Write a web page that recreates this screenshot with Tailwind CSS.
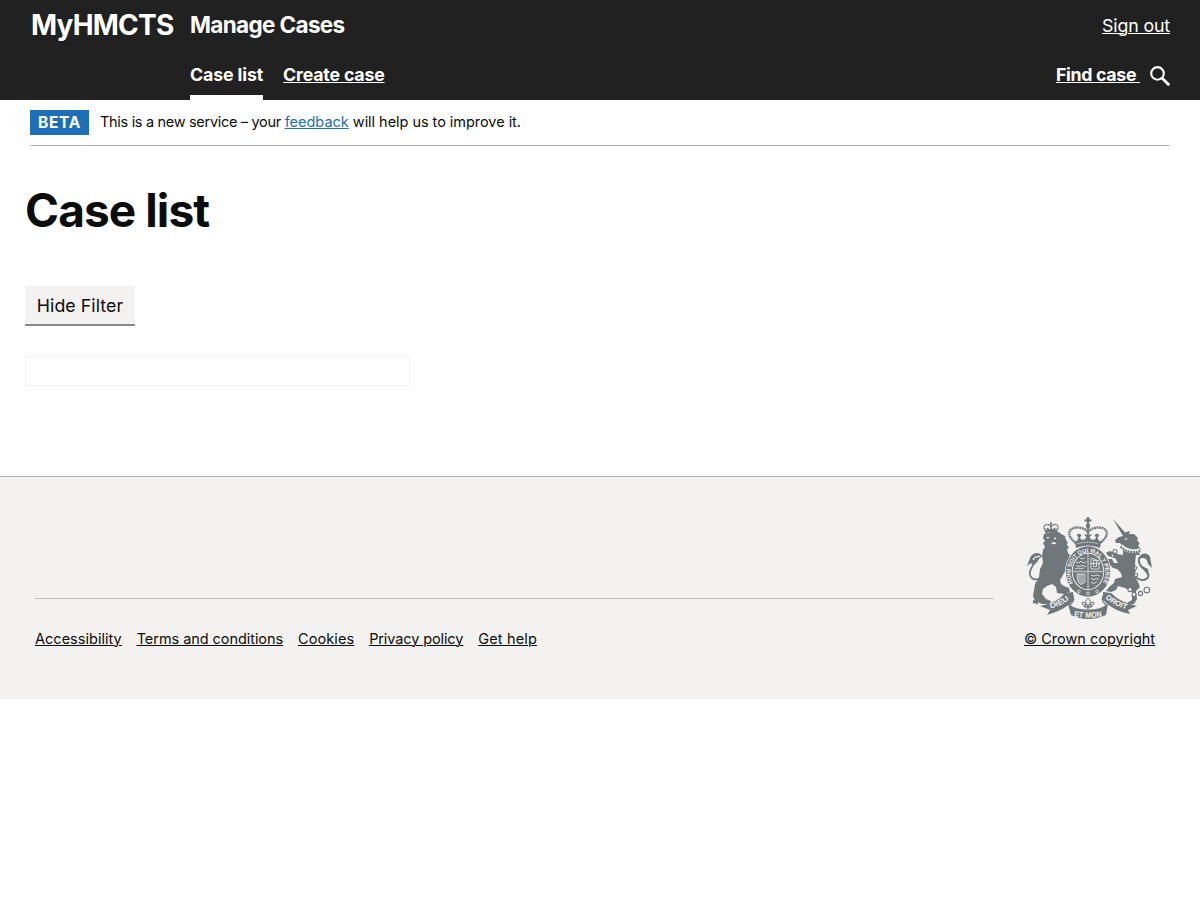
<!DOCTYPE html>
<html lang="en">
<head>
<meta charset="utf-8">
<title>Case list - Manage Cases</title>
<script src="https://cdn.jsdelivr.net/npm/@tailwindcss/browser@4"></script>
</head>
<body class="bg-white text-[#0b0c0c] font-['Inter','Liberation_Sans',sans-serif]">
<header class="h-[100px] bg-[#212121] text-white px-[30px] flex flex-col justify-between">
  <div class="flex h-[50px] items-center">
    <div class="w-40 pl-px text-[28px] font-bold leading-[50px] tracking-[-0.8px]">MyHMCTS</div>
    <div class="text-[22.5px] font-bold leading-[50px] tracking-[-0.65px]">Manage Cases</div>
    <a href="#" class="ml-auto pt-px text-[17.8px] leading-[50px] tracking-[-0.15px] underline decoration-1 underline-offset-1">Sign out</a>
  </div>
  <nav class="flex h-[50px] pl-40 text-[17.8px] font-bold leading-[50px]">
    <a href="#" class="h-[50px] border-b-5 border-white mr-5 tracking-[-0.14px]">Case list</a>
    <a href="#" class="tracking-[-0.2px] underline decoration-1 underline-offset-1">Create case</a>
    <a href="#" class="ml-auto whitespace-pre tracking-[-0.35px] underline decoration-1 underline-offset-1">Find case </a>
    <svg class="ml-2.5 mt-4 w-5 h-5" viewBox="0 0 20 20" fill="none" stroke="white"><circle cx="7.5" cy="7.4" r="6.3" stroke-width="2.1"/><path d="M12.2 12.2 19.2 19.2" stroke-width="2.8"/></svg>
  </nav>
</header>
<div class="mx-[30px] h-[46px] pt-2.5 border-b border-[#b1b4b6] flex items-start">
  <strong class="h-[25px] px-2 bg-[#1d70b8] text-white text-[15.5px] font-bold leading-[25px] tracking-[0.7px]">BETA</strong>
  <span class="ml-[11px] text-[14.5px] leading-6 whitespace-pre"><span class="tracking-[-0.31px]">This is a new service – your </span><a href="#" class="text-[#1d70b8] underline decoration-1 underline-offset-1">feedback</a><span class="tracking-[-0.04px]"> will help us to improve it.</span></span>
</div>
<main class="px-[25px] h-[330px]">
  <h1 class="pt-[39px] text-[46px] font-bold leading-[50px] tracking-[-0.9px]">Case list</h1>
  <button class="block mt-[51px] w-[110px] h-10 bg-[#f3f2f1] border-b-2 border-[#858b8f] text-[17.8px] leading-[38px] pt-px tracking-[0.05px]">Hide Filter</button>
  <div class="mt-[30px] w-[385px] h-[30px] border border-[#f3f2f1]"></div>
</main>
<footer class="h-[223px] bg-[#f3f2f1] border-t border-[#b1b4b6] pl-[35px] pr-[45px] flex justify-between text-[14.5px] leading-5">
  <div class="w-[959px] pt-[121px]">
    <div class="border-t border-[#bfc1c3]"></div>
    <div class="mt-[30px] flex gap-[15px] underline decoration-1 underline-offset-1">
      <a href="#" class="tracking-[0.02px]">Accessibility</a>
      <a href="#" class="tracking-[-0.06px]">Terms and conditions</a>
      <a href="#" class="tracking-[0.07px]">Cookies</a>
      <a href="#" class="tracking-[-0.11px]">Privacy policy</a>
      <a href="#" class="tracking-[0.15px]">Get help</a>
    </div>
  </div>
  <div class="pt-10 w-[131px] flex flex-col items-center">
    <svg class="w-[125px] h-[102px] shrink-0" viewBox="0 0 125 102" fill="#6f777b">
      <defs>
        <path id="motto" d="M46 66A17.400 20.300 0 1 1 76 66"/>
        <path id="dieu" d="M23.500 91.500Q35 89 45 80.500"/>
        <path id="mon" d="M45 99.300Q61 102 77 99.300"/>
        <path id="droit" d="M77.500 80.500Q88 90 102 92.800"/>
      </defs>
      <!-- lion -->
      <g>
        <path d="M18.500 14C16 10 17 7.500 20 7.500Q22.500 7.500 24 9.500 25.500 7.500 28 7.500C31 7.500 32 10 29.500 14" fill="none" stroke="#6f777b" stroke-width="1.600" stroke-dasharray="1.400 .5"/>
        <path d="M18.500 16.500 18 13Q24 10.500 30.200 13L29.800 16.500Q24 14 18.500 16.500ZM23.200 5h1.600v7h-1.600zM20.500 10.500 22 12h-3zM27.500 10.500 29 12h-3z"/>
        <path d="M17 17Q26 14 32 15L34 17 38 19 39 23 41 26 39.500 27 42 31 40 32 41 36 43 38 42 40 45 44 44 46 46 49 44 53 40 52 37 56 35 60 33 63 34 67 37 69 42 71 43 75 37 77 30 76 29 70 25 67 20 69 16 72 15 77 19 82 24 84 23 87 15 87 8 84 6 79 7 73 8 67 12 60 13 52 16 46 15 39 16 33 18 30 16 26 18 24 16 21Z"/>
        <path d="M12 62C4 64 1 58 4 52C6 47 10 43 12 40" fill="none" stroke="#6f777b" stroke-width="1.700"/>
        <path d="M15 39C12 34 5 36 3 41L0 49 4 46C6 50 10 46 12 42Z"/>
        <path d="M6 43Q8 39 13 39.500" fill="none" stroke="#f3f2f1" stroke-width="1.300"/>
        <path d="M6 83 12 84 10 88 8 86 6 87Z"/>
        <path d="M19.500 20h3l-1 1.200h-2zM27 20.500l2.500.5-1 1.500-1.500-.7zM23.500 26l4-1 2 2-3 .3z" fill="#f3f2f1"/>
      </g>
      <!-- unicorn -->
      <g>
        <path d="M86 2 99 16.500 96 19ZM96 19 99 15 103 14 102 17 107 17 111 21 110 23 113 27 111 28 114 33 111 34 113 38 109 38 108 46 109 53 107 59 111 65 113 70 109 74 110 82 107 87 101 88 100 86 105 83 105 75 98 71 91 69 89 73 84 75 79 74 82 70 87 66 88 62 95 60 94 56 90 52 86 51 82 47 81 42 85 42 87 46 91 46 88 41 81 39 79 35.500 83 34 90 37 96 38 96 30 93 26 89 26 88 23 92 20Z"/>
        <path d="M94 29Q103 37 113 33" fill="none" stroke="#f3f2f1" stroke-width="4"/>
        <path d="M93.500 29.500Q102 38 113.500 34" fill="none" stroke="#6f777b" stroke-width="2.400" stroke-dasharray="1.900 .9"/>
        <path d="M108 60C117 67 126 60 119 54C113 49 111 46 112 41" fill="none" stroke="#6f777b" stroke-width="1.900"/>
        <path d="M111 43C113 35 121 35 123 40L125 51 121 47Q120 40 115 41ZM113 48 121 52 122 60 117 53Z"/>
        <path d="M98 21l3 1-3 1z" fill="#f3f2f1"/>
        <g fill="#f3f2f1" stroke="#6f777b" stroke-width="1.100"><circle cx="88" cy="34.500" r="2"/><circle cx="85.500" cy="38.500" r="1.500"/><circle cx="108.500" cy="51" r="1.500"/><circle cx="109" cy="58" r="1.700"/><circle cx="103" cy="72.500" r="2.100"/><circle cx="107" cy="77.500" r="2"/><circle cx="113.500" cy="76.500" r="2.100"/><circle cx="119.800" cy="73" r="2.800"/></g>
      </g>
      <!-- royal crown -->
      <g>
        <path d="M59.800 0h2.400v2.300h2.300v2.200h-2.300V7h-2.400V4.500h-2.300V2.300h2.300z"/>
        <circle cx="61" cy="9" r="2.200"/>
        <path d="M49 26C37 17 43 10 51 10.500Q58 11 61 15 64 11 71 10.500C79 10 85 17 73 26" fill="none" stroke="#6f777b" stroke-width="2.400" stroke-dasharray="1.900 .6"/>
        <path d="M61 11V25" fill="none" stroke="#6f777b" stroke-width="2.200" stroke-dasharray="1.700 .5"/>
        <path d="M48 24.500Q61 20 74 24.500L73 31Q61 26 49 31ZM57.500 23 59.500 20 57 17.500H65L62.500 20 64.500 23ZM50 24 51.500 20.500 49.500 18 52 16.500 54.500 18 53 20.500 55 24ZM67 24 69 20.500 67.500 18 70 16.500 72.500 18 70.500 20.500 72 24Z"/>
        <path d="M50.500 26.800Q61 23.500 71.500 26.800" fill="none" stroke="#f3f2f1" stroke-width=".8" stroke-dasharray="2 1"/>
      </g>
      <!-- garter and shield -->
      <ellipse cx="61" cy="54.500" rx="22.900" ry="25.800" fill="#f3f2f1"/>
      <ellipse cx="61" cy="54.500" rx="22.200" ry="25.200"/>
      <text font-family="Liberation Sans" font-weight="700" font-size="5.900" fill="#f3f2f1"><textPath href="#motto" textLength="80" lengthAdjust="spacingAndGlyphs">HONI SOIT QUI MAL Y PENSE</textPath></text>
      <ellipse cx="61" cy="54.500" rx="16.200" ry="18.700" fill="#f3f2f1"/>
      <ellipse cx="61" cy="54.500" rx="15.300" ry="17.800"/>
      <path d="M61 36.500V72.500M45.500 54.500H76.500" stroke="#b9bdbe" stroke-width="1.400"/>
      <g fill="none" stroke="#f3f2f1" stroke-width=".8">
        <path d="M49 45l3 1 2-2 2 2 3-1M49 48.500l3 1 3-1 4 1M48 52l3-1 2 1 4-1M53 41l2 1 3-1M64 41v11h8V44zM66.500 43.500h3v6h-3zM63 46.500h10M50 57h8v8q-4 4-6 1-2-3-2-9M52 57v8M54 57v10M56 57v9M64 58l3 1 2-1 4 1M64 61.500l3 1 3-1 2 1M64 65.500l3 1 3-2"/>
        <circle cx="52" cy="74.500" r="1.300"/><circle cx="61" cy="76.500" r="1.400"/><circle cx="70" cy="74.500" r="1.300"/>
      </g>
      <!-- motto scroll -->
      <path d="M13 89Q30 86 38 76L46 75 47 83Q38 93 20 98L23 93Z"/>
      <path d="M110 89Q94 86 84 76L76 75 76 83Q86 94 103 97L101 93Z"/>
      <path d="M44 77Q50 82 43 88L46 95" fill="none" stroke="#6f777b" stroke-width="1.300"/>
      <path d="M78 77Q72 82 79 88L76 95" fill="none" stroke="#6f777b" stroke-width="1.300"/>
      <path d="M41 87Q48 92.500 61 92.500T81 87L79 98Q70 102 61 102T44 98Z"/>
      <g font-family="Liberation Sans" font-weight="700" fill="#f3f2f1">
        <text font-size="7.600"><textPath href="#dieu" textLength="21" lengthAdjust="spacingAndGlyphs">DIEU</textPath></text>
        <text font-size="8"><textPath href="#mon" startOffset="2" textLength="28" lengthAdjust="spacingAndGlyphs">ET MON</textPath></text>
        <text font-size="7.600"><textPath href="#droit" startOffset="1" textLength="24" lengthAdjust="spacingAndGlyphs">DROIT</textPath></text>
      </g>
      <path d="M61 81Q57 84 60 88H62Q65 84 61 81ZM59 88Q55 89 55.500 85.500 58 84 59 88ZM63 88Q67 89 66.500 85.500 64 84 63 88ZM57 89h8v1h-8zM60 90h2l-1 2z" fill="none" stroke="#6f777b" stroke-width="1"/>
    </svg>
    <a href="#" class="mt-[10px] whitespace-nowrap underline decoration-1 underline-offset-1">© Crown copyright</a>
  </div>
</footer>
</body>
</html>
